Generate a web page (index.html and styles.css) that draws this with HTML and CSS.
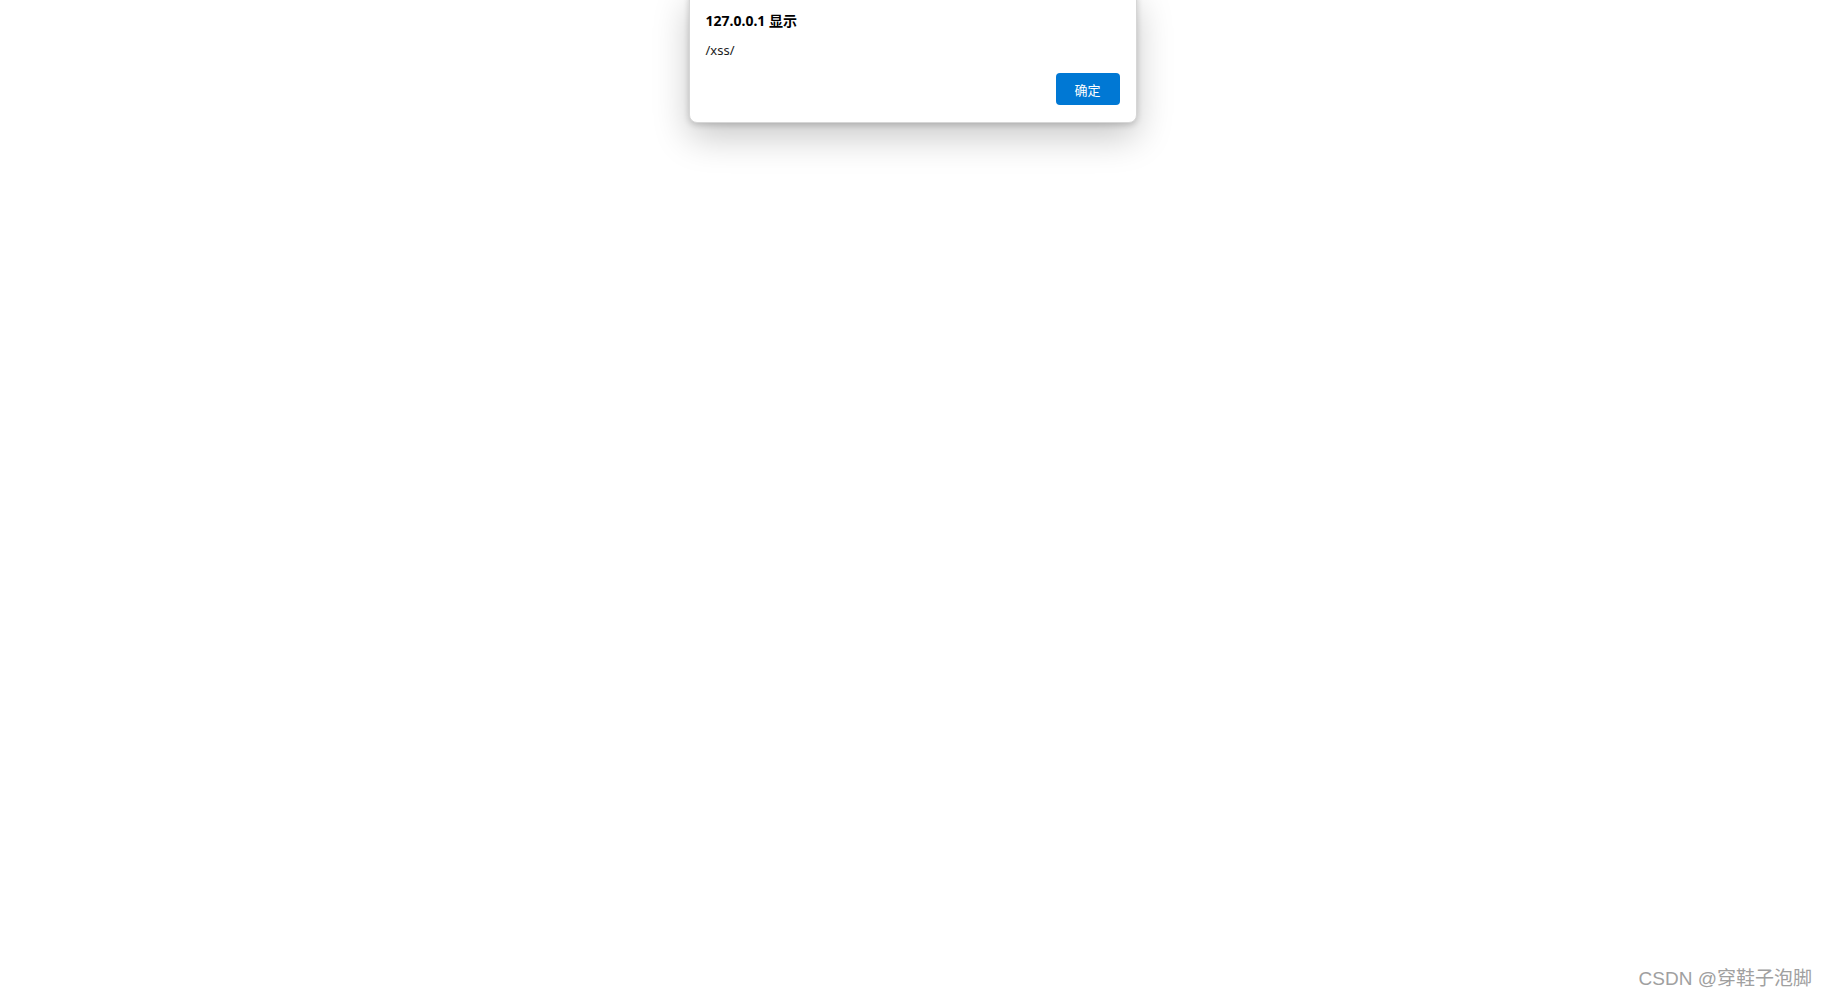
FILE: index.html
```html
<!DOCTYPE html>
<html lang="zh-CN">
<head>
    <meta charset="UTF-8">
    <title>XSS</title>
    <link rel="stylesheet" href="styles.css">
</head>
<body>
    <div class="dialog-layer">
        <div class="dialog">
            <h2 class="dialog-title">127.0.0.1 显示</h2>
            <p class="dialog-message">/xss/</p>
            <div class="dialog-actions">
                <button class="btn" type="button">确定</button>
            </div>
        </div>
    </div>
    <div class="watermark">CSDN @穿鞋子泡脚</div>
</body>
</html>
```

FILE: styles.css
```css
* {
    margin: 0;
    padding: 0;
    box-sizing: border-box;
}

body {
    height: 100vh;
    overflow: hidden;
    background-color: #ffffff;
    font-family: "Noto Sans", "Noto Sans CJK SC", sans-serif;
    color: #000;
}

.dialog-layer {
    display: flex;
    justify-content: center;
}

.dialog {
    width: 448px;
    margin-top: -10px;
    padding: 21px 16px 17px 16px;
    background-color: #fff;
    border: 1px solid #d6d6d6;
    border-radius: 8px;
    box-shadow: 0 14px 36px rgba(0, 0, 0, 0.22), 0 2px 6px rgba(0, 0, 0, 0.18);
}

.dialog-title {
    font-size: 14px;
    font-weight: bold;
    line-height: 18px;
}

.dialog-message {
    font-size: 13px;
    line-height: 18px;
    margin-top: 11px;
    color: #1a1a1a;
}

.dialog-actions {
    display: flex;
    justify-content: flex-end;
    margin-top: 14px;
}

.btn {
    width: 64px;
    height: 32px;
    border: none;
    border-radius: 4px;
    background-color: #0078d4;
    color: #fff;
    font-family: "Noto Sans CJK SC", sans-serif;
    font-size: 13px;
    cursor: pointer;
}

.watermark {
    position: absolute;
    right: 13px;
    bottom: 8px;
    font-family: "Liberation Sans", "Noto Sans CJK SC", sans-serif;
    font-size: 19px;
    color: #a0a0a0;
    text-shadow: 0 0 1px #fff;
}
```
